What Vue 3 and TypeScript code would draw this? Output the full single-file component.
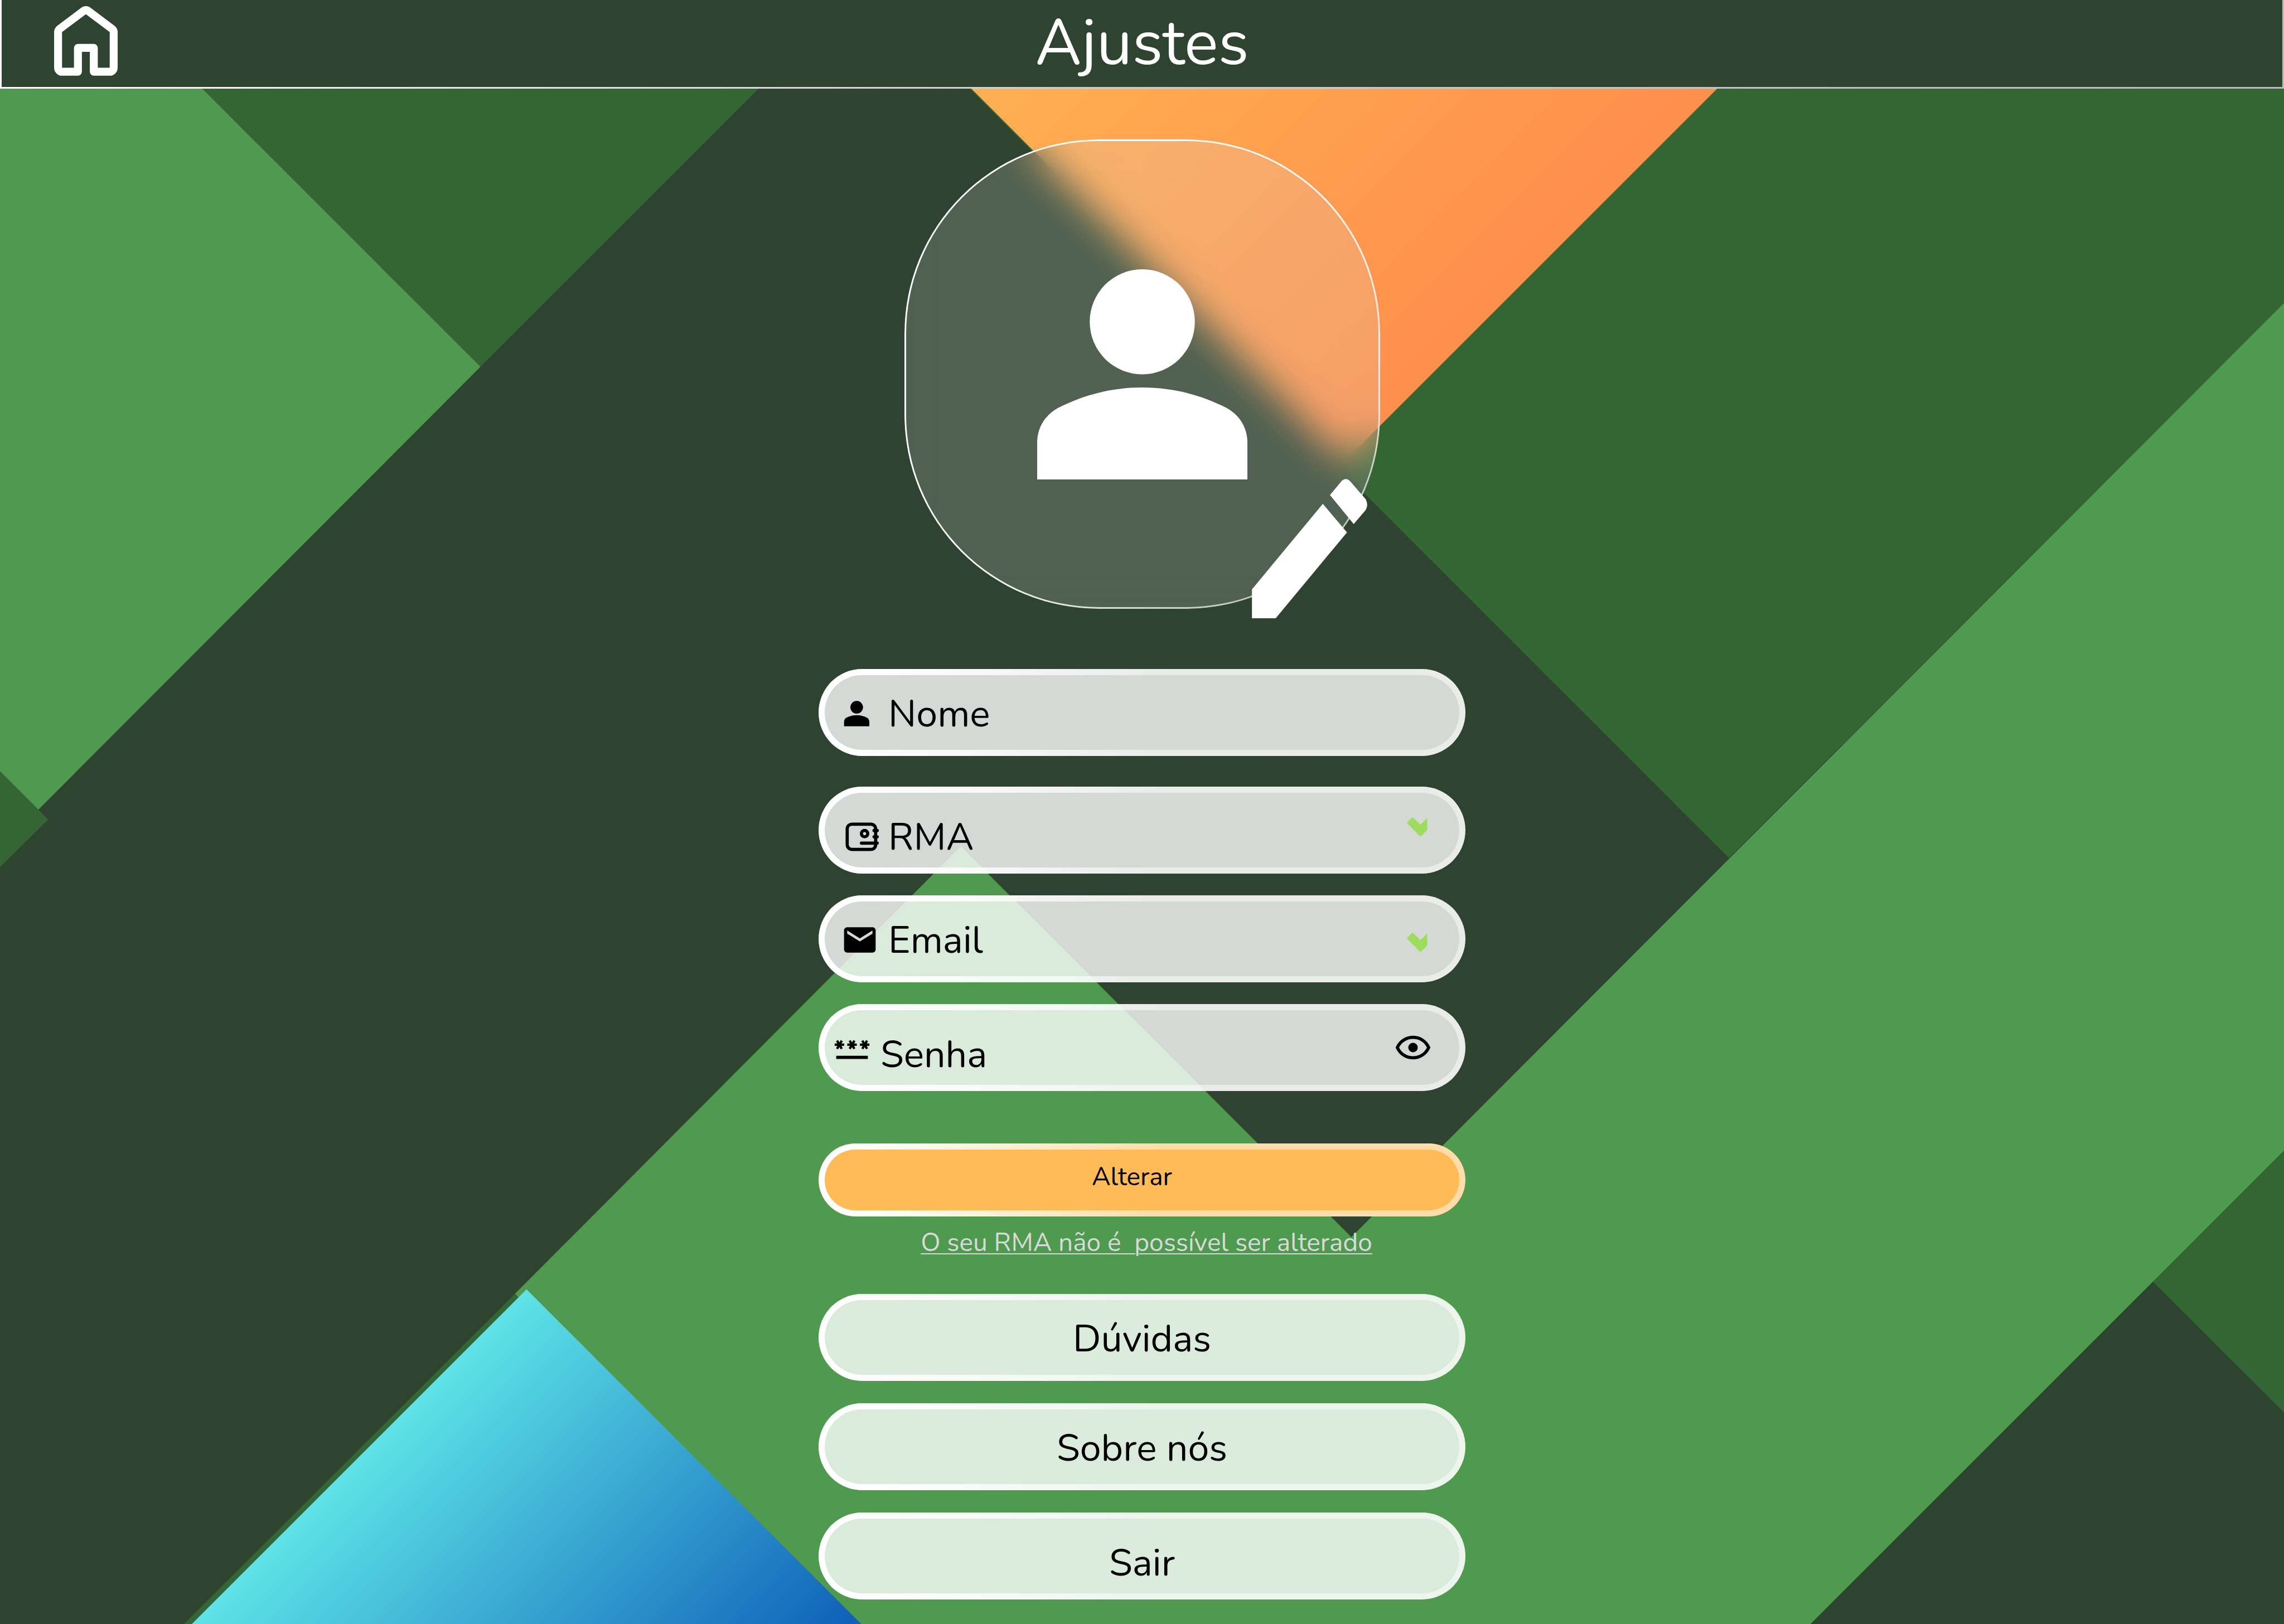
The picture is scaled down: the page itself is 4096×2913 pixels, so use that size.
<script setup lang="ts">
import { reactive, ref } from 'vue'

const form = reactive({ nome: '', rma: '', email: '', senha: '' })
const senhaVisivel = ref(false)

const links: { label: string; low?: boolean }[] = [
  { label: 'Dúvidas' },
  { label: 'Sobre nós' },
  { label: 'Sair', low: true },
]
</script>

<template>
  <div class="page">
    <svg class="backdrop" viewBox="0 0 5760 4096" preserveAspectRatio="xMidYMid slice" aria-hidden="true">
      <defs>
        <linearGradient id="sunset" gradientUnits="userSpaceOnUse" x1="2450" y1="224" x2="3390" y2="1164">
          <stop offset="0" stop-color="#ffb052" />
          <stop offset="1" stop-color="#ff8f4c" />
        </linearGradient>
        <linearGradient id="ocean" gradientUnits="userSpaceOnUse" x1="906" y1="3674" x2="1750" y2="4518">
          <stop offset="0" stop-color="#5de3e7" />
          <stop offset="1" stop-color="#0e5fb8" />
        </linearGradient>
      </defs>
      <rect width="5760" height="4096" fill="#2f4430" />
      <!-- top left -->
      <polygon points="0,0 287,0 1212,925 97,2042 0,1945" fill="#4e9a4e" />
      <polygon points="287,0 2137,0 1212,925" fill="#346633" />
      <polygon points="0,1945 122,2067 0,2187" fill="#346633" />
      <!-- right side -->
      <polygon points="2222,0 5760,0 5760,764 4360,2164 3438,1242 3386,1164" fill="#346633" />
      <polygon points="2226,0 4554,0 3390,1164" fill="url(#sunset)" />
      <!-- lower band -->
      <polygon points="1299,3263 1340,3300 500,4096 464,4096" fill="#346633" />
      <polygon
        points="2423,2135 3408,3120 5760,764 5760,2902 4566,4096 2171,4096 1308,3272 1299,3263"
        fill="#4e9a4e"
      />
      <polygon points="1328,3252 2172,4096 484,4096" fill="url(#ocean)" />
      <polygon points="5429,3233 5760,2902 5760,3563" fill="#346633" />
      <polygon points="5429,3233 5760,3564 5760,4096 4566,4096" fill="#2f4430" />
    </svg>

    <header class="topbar">
      <a href="#inicio" class="home" aria-label="Início">
        <svg viewBox="136 16 160 175" fill="#fff" fill-rule="evenodd">
          <path
            d="M136 81Q136 72 143.500 65.500L206 18.500Q216 13 226 18.500L288.500 65.500Q296 72 296 81V171a20 20 0 0 1-20 20H236a10 10 0 0 1-10-10V131H206V181a10 10 0 0 1-10 10H156a20 20 0 0 1-20-20ZM156 81V171H186V121a10 10 0 0 1 10-10H236a10 10 0 0 1 10 10V171H276V81L216 36Z"
          />
        </svg>
      </a>
      <h1>Ajustes</h1>
    </header>

    <main class="content">
      <section class="avatar" aria-label="Foto de perfil">
        <svg class="avatar-person" viewBox="4 4 16 16" fill="#fff">
          <circle cx="12" cy="8" r="4" />
          <path d="M4 20V17.200C4 16.050 4.600 15.100 5.600 14.550C7.600 13.550 9.700 13 12 13S16.400 13.550 18.400 14.550C19.400 15.100 20 16.050 20 17.200V20Z" />
        </svg>
        <button type="button" class="edit" aria-label="Editar foto">
          <svg viewBox="0 0 291 352" fill="#fff">
            <path d="M0 279L179 63L240 135L60 352H0Z" />
            <path d="M197 41L226 6Q237 -5 248 6L287 51Q295 65 287 79L257 114Z" />
          </svg>
        </button>
      </section>

      <form class="fields" @submit.prevent>
        <div class="pill field first">
          <div class="lead">
            <svg class="icon" viewBox="2 0 24 24" aria-hidden="true">
              <circle cx="12" cy="8" r="4" />
              <path d="M4 20V17.200C4 16.050 4.600 15.100 5.600 14.550C7.600 13.550 9.700 13 12 13S16.400 13.550 18.400 14.550C19.400 15.100 20 16.050 20 17.200V20Z" />
            </svg>
            <input v-model="form.nome" type="text" placeholder="Nome" aria-label="Nome" />
          </div>
        </div>

        <div class="pill field low">
          <div class="lead">
            <svg class="icon" viewBox="0 0 24 24" aria-hidden="true">
              <g fill="none" stroke="#000" stroke-width="2">
                <rect x="4" y="4" width="18" height="16" rx="3" />
                <circle cx="15" cy="10" r="2" />
                <path d="M13 16H23M21 8H23M21 12H23" stroke-linecap="round" />
              </g>
            </svg>
            <input v-model="form.rma" type="text" placeholder="RMA" aria-label="RMA" />
          </div>
          <svg class="status" viewBox="54 70 153 144" aria-hidden="true">
            <path d="M56 108L88 75Q95 67 103 75L155 126L207 75V166L163 210Q155 217 147 210L56 118Q52 113 56 108Z" />
          </svg>
        </div>

        <div class="pill field">
          <div class="lead">
            <svg class="icon" viewBox="0 0 24 24" aria-hidden="true">
              <path d="M20 4H4C2.900 4 2 4.900 2 6V18C2 19.100 2.900 20 4 20H20C21.100 20 22 19.100 22 18V6C22 4.900 21.100 4 20 4ZM20 8L12 13L4 8V6L12 11L20 6Z" />
            </svg>
            <input v-model="form.email" type="email" placeholder="Email" aria-label="Email" />
          </div>
          <svg class="status" viewBox="54 70 153 144" aria-hidden="true">
            <path d="M56 108L88 75Q95 67 103 75L155 126L207 75V166L163 210Q155 217 147 210L56 118Q52 113 56 108Z" />
          </svg>
        </div>

        <div class="pill field low senha">
          <div class="lead">
            <svg class="icon" viewBox="0 4 24 24" aria-hidden="true">
              <defs>
                <path
                  id="asterisk"
                  d="M3.150 12.950L4 11.470L4.850 12.950L6.150 12.200L5.300 10.720H7V9.220H5.300L6.150 7.750L4.850 7L4 8.470L3.150 7L1.850 7.750L2.700 9.220H1V10.720H2.700L1.850 12.200Z"
                />
              </defs>
              <use href="#asterisk" />
              <use href="#asterisk" x="8" />
              <use href="#asterisk" x="16" />
              <path d="M2 17H22V19H2Z" />
            </svg>
            <input
              v-model="form.senha"
              :type="senhaVisivel ? 'text' : 'password'"
              placeholder="Senha"
              aria-label="Senha"
            />
          </div>
          <button type="button" class="eye" aria-label="Mostrar senha" @click="senhaVisivel = !senhaVisivel">
            <svg class="icon" viewBox="0 0 24 24">
              <path
                fill-rule="evenodd"
                d="M12 4.500C7 4.500 2.730 7.610 1 12C2.730 16.390 7 19.500 12 19.500S21.270 16.390 23 12C21.270 7.610 17 4.500 12 4.500ZM12 6.500C15.790 6.500 19.170 8.630 20.820 12C19.170 15.370 15.790 17.500 12 17.500S4.830 15.370 3.180 12C4.830 8.630 8.210 6.500 12 6.500Z"
              />
              <circle cx="12" cy="12" r="3" />
            </svg>
          </button>
        </div>

        <button type="submit" class="pill submit">Alterar</button>
        <p class="note">O seu RMA não é&nbsp; possível ser alterado</p>
      </form>

      <nav class="links" aria-label="Mais opções">
        <button v-for="link in links" :key="link.label" type="button" class="pill link" :class="{ low: link.low }">
          {{ link.label }}
        </button>
      </nav>
    </main>
  </div>
</template>

<style>
body {
  margin: 0;
  background: #2f4430;
}
</style>

<style scoped>
.page,
.page * {
  box-sizing: border-box;
}

.page {
  position: relative;
  min-height: 100vh;
  overflow: hidden;
  font-family: Nunito, Lato, sans-serif;
  color: #000;
}

.backdrop {
  position: absolute;
  inset: 0;
  width: 100%;
  height: 100%;
}

.topbar {
  position: relative;
  display: grid;
  grid-template-columns: 1fr auto 1fr;
  height: 159px;
  padding-left: 94px;
  padding-right: 94px;
  background: #2f4430;
  border: 3px solid;
  border-top: 0;
  border-image: linear-gradient(90deg, #fff, #cbd0cb 45%, #b8beb8) 1;
}

.home {
  display: flex;
  align-items: flex-start;
  padding-top: 11px;
}

.home svg {
  width: 114px;
  height: 125px;
}

h1 {
  margin: 0;
  font-size: 114px;
  font-weight: 400;
  line-height: 156px;
  color: #fff;
}

.content {
  position: relative;
  display: flex;
  flex-direction: column;
  align-items: center;
  padding: 91px 24px 44px;
}

.avatar {
  position: relative;
  display: flex;
  justify-content: center;
  width: 853px;
  height: 842px;
  padding-top: 233px;
  border-radius: 348px;
  background: rgba(217, 217, 217, 0.2);
  backdrop-filter: blur(34px);
}

.avatar::before,
.pill::before {
  content: '';
  position: absolute;
  inset: 0;
  border-radius: inherit;
  pointer-events: none;
  mask: linear-gradient(#000 0 0) content-box exclude, linear-gradient(#000 0 0);
}

.avatar::before {
  padding: 3px;
  background: linear-gradient(135deg, #fff 50%, rgba(255, 255, 255, 0.65) 85%);
}

.avatar-person {
  width: 377px;
  height: 377px;
}

.edit {
  position: absolute;
  right: 23px;
  bottom: -17px;
  padding: 0;
  border: 0;
  background: none;
}

.edit svg {
  display: block;
  width: 207px;
  height: 250px;
}

.fields,
.links {
  display: flex;
  flex-direction: column;
  width: 100%;
  max-width: 1160px;
}

.fields {
  gap: 39px;
  margin-top: 108px;
}

.pill {
  position: relative;
  display: flex;
  align-items: center;
  height: 156px;
  border: 0;
  border-radius: 78px;
  background: rgba(255, 255, 255, 0.8);
  font-family: inherit;
  font-size: 68px;
  color: inherit;
}

.pill::before {
  padding: 11px;
  background: linear-gradient(100deg, #fff 8%, rgba(255, 255, 255, 0.5) 52%);
}

.field {
  justify-content: space-between;
  padding: 0 60px 0 40px;
}

.first {
  margin-bottom: 16px;
}

.senha {
  padding-left: 26px;
}

.lead {
  display: flex;
  flex: 1;
  align-items: center;
  gap: 17px;
  padding-top: 4px;
}

.low .lead {
  padding-top: 24px;
}

.icon {
  display: block;
  flex: none;
  width: 68px;
  height: 68px;
}

input {
  flex: 1;
  min-width: 0;
  height: 100px;
  padding: 0;
  border: 0;
  outline: 0;
  background: none;
  font: inherit;
  color: inherit;
}

input::placeholder {
  color: #000;
  opacity: 1;
}

.status {
  width: 37px;
  height: 34px;
  margin: 12px 8px 0 0;
  fill: #9edd5c;
}

.low .status {
  margin-top: 0;
  margin-bottom: 12px;
}

.eye {
  padding: 0;
  border: 0;
  background: none;
}

.submit {
  justify-content: center;
  height: 131px;
  margin-top: 55px;
  padding: 0 36px 12px 0;
  background: #ffbb55;
  font-size: 46px;
}

.note {
  margin: -19px 0 0;
  padding-left: 16px;
  font-size: 46px;
  line-height: 54px;
  text-align: center;
  text-decoration: underline;
  text-decoration-thickness: 2px;
  text-underline-offset: 4px;
  color: #d9d9d9;
}

.links {
  gap: 40px;
  margin-top: 65px;
}

.link {
  justify-content: center;
  padding: 4px 0 0;
}

.link.low {
  padding-top: 24px;
}
</style>
